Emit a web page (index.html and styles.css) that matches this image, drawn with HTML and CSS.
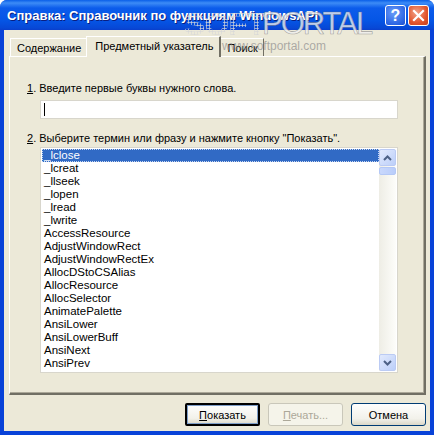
FILE: index.html
```html
<!DOCTYPE html>
<html lang="ru">

<head>
  <meta charset="UTF-8" />
  <title>Справка: Справочник по функциям WindowsAPI</title>
  <link rel="stylesheet" href="styles.css">
</head>

<body>
  <div class="window">
    <div class="titlebar">
      <span class="title">Справка: Справочник по функциям WindowsAPI</span>
      <div class="caption-buttons">
        <div class="cap-btn help">?</div>
        <div class="cap-btn close">
          <svg width="13" height="13" viewBox="0 0 13 13">
            <path d="M2 2 L11 11 M11 2 L2 11" stroke="#fff" stroke-width="2.2" stroke-linecap="square" />
          </svg>
        </div>
      </div>
    </div>

    <div class="client">
      <div class="tabs">
        <div class="tab">Содержание</div>
        <div class="tab active">Предметный указатель</div>
        <div class="tab">Поиск</div>
      </div>

      <div class="panel">
        <div class="step"><u>1</u>. Введите первые буквы нужного слова.</div>
        <div class="edit"><span class="caret"></span></div>

        <div class="step"><u>2</u>. Выберите термин или фразу и нажмите кнопку "Показать".</div>
        <div class="listbox">
          <ul class="items">
            <li class="selected">_lclose</li>
            <li>_lcreat</li>
            <li>_llseek</li>
            <li>_lopen</li>
            <li>_lread</li>
            <li>_lwrite</li>
            <li>AccessResource</li>
            <li>AdjustWindowRect</li>
            <li>AdjustWindowRectEx</li>
            <li>AllocDStoCSAlias</li>
            <li>AllocResource</li>
            <li>AllocSelector</li>
            <li>AnimatePalette</li>
            <li>AnsiLower</li>
            <li>AnsiLowerBuff</li>
            <li>AnsiNext</li>
            <li>AnsiPrev</li>
          </ul>
          <div class="scrollbar">
            <div class="sb-btn">
              <svg width="9" height="6" viewBox="0 0 9 6"><path d="M1 5 L4.5 1.5 L8 5" fill="none" stroke="#4d6185" stroke-width="2" /></svg>
            </div>
            <div class="sb-thumb"></div>
            <div class="sb-track"></div>
            <div class="sb-btn">
              <svg width="9" height="6" viewBox="0 0 9 6"><path d="M1 1 L4.5 4.5 L8 1" fill="none" stroke="#4d6185" stroke-width="2" /></svg>
            </div>
          </div>
        </div>
      </div>

      <div class="buttons">
        <button class="default"><u>П</u>оказать</button>
        <button disabled><u>П</u>ечать...</button>
        <button>Отмена</button>
      </div>
    </div>

    <!-- watermark over the caption -->
    <div class="watermark">
      <span class="wm-soft">SOFT</span><span class="wm-portal">PORTAL</span>
      <span class="wm-url">www.softportal.com</span>
    </div>
  </div>
</body>

</html>
```

FILE: styles.css
```css
body {
  margin: 0;
  font-family: "Liberation Sans", Arial, sans-serif;
  font-size: 11px;
  background: #fff;
}

.window {
  position: relative;
  width: 434px;
  height: 435px;
  box-sizing: border-box;
  background: #0842d8;
  border-radius: 7px 7px 0 0;
  display: flex;
  flex-direction: column;
  overflow: hidden;
}

.titlebar {
  height: 30px;
  flex: none;
  display: flex;
  align-items: center;
  justify-content: space-between;
  padding: 0 5px 0 7px;
  background: linear-gradient(#0a5fe8 0, #3d8cf6 3px, #0c5ceb 8px, #0556e6 20px, #0748d6 28px, #0a3fcc 30px);
}

.title {
  color: #fff;
  font-weight: bold;
  font-size: 13px;
  text-shadow: 1px 1px 0 #0a1e80;
  white-space: nowrap;
}

.caption-buttons {
  display: flex;
  gap: 2px;
  margin-top: 1px;
}

.cap-btn {
  width: 21px;
  height: 21px;
  box-sizing: border-box;
  border: 1px solid #fff;
  border-radius: 3px;
  display: flex;
  align-items: center;
  justify-content: center;
  color: #fff;
}

.help {
  background: radial-gradient(circle at 40% 35%, #6a9cf8, #2d66e4 70%, #1f4fcc);
  font-weight: bold;
  font-size: 16px;
}

.close {
  background: radial-gradient(circle at 40% 35%, #f2a48a, #e2552c 60%, #c5401d);
}

.client {
  flex: 1;
  margin: 0 4px 4px 4px;
  background: #ece9d8;
  padding: 6px 0 0 5px;
  display: flex;
  flex-direction: column;
}

.tabs {
  display: flex;
  align-items: flex-end;
  height: 20px;
  padding-left: 1px;
  position: relative;
  z-index: 1;
}

.tab {
  height: 18px;
  box-sizing: border-box;
  padding: 3px 5px 0 6px;
  border: 1px solid #fff;
  border-right-color: #716f64;
  border-bottom: none;
  background: #ece9d8;
  white-space: nowrap;
  font-size: 11px;
  color: #000;
}

.tab.active {
  height: 21px;
  padding: 3px 6px 0 8px;
  margin: 0 -1px -1px -1px;
  border-right: 2px solid #716f64;
  position: relative;
}

.panel {
  width: 417px;
  height: 339px;
  box-sizing: border-box;
  border: 1px solid #fff;
  border-right: 2px solid #716f64;
  border-bottom: 2px solid #716f64;
  box-shadow: inset -1px -1px 0 #aca899;
  padding: 25px 0 0 17px;
}

.step {
  height: 13px;
  color: #000;
  white-space: nowrap;
}

.step u {
  text-decoration-thickness: 1px;
}

.edit {
  width: 358px;
  height: 19px;
  box-sizing: border-box;
  margin: 5px 0 13px 13px;
  background: #fff;
  border: 1px solid #d8d6cc;
  display: flex;
  align-items: center;
  padding-left: 3px;
}

.caret {
  width: 1px;
  height: 13px;
  background: #000;
}

.listbox {
  width: 358px;
  height: 226px;
  box-sizing: border-box;
  margin: 2px 0 0 13px;
  background: #fff;
  border: 1px solid #d8d6cc;
  padding: 1px;
  display: flex;
  overflow: hidden;
}

.items {
  list-style: none;
  margin: 0;
  padding: 0;
  flex: 1;
  overflow: hidden;
}

.items li {
  height: 13px;
  line-height: 13px;
  padding-left: 2px;
  font-size: 11.5px;
  white-space: nowrap;
  color: #000;
}

.items li.selected {
  background: #316ac5;
  color: #fff;
  outline: 1px dotted #c7d6f0;
  outline-offset: -1px;
}

.scrollbar {
  width: 17px;
  display: flex;
  flex-direction: column;
  background: linear-gradient(90deg, #eeede5, #fdfdfa);
}

.sb-btn {
  height: 17px;
  box-sizing: border-box;
  border: 1px solid #bbcbf4;
  border-radius: 2px;
  background: linear-gradient(135deg, #e2eafd, #bccff9);
  display: flex;
  align-items: center;
  justify-content: center;
}

.sb-thumb {
  height: 8px;
  margin-top: 1px;
  box-sizing: border-box;
  border: 1px solid #b4c8f6;
  border-radius: 2px;
  background: linear-gradient(90deg, #c9d8fc, #b9cdfa);
}

.sb-track {
  flex: 1;
}

.buttons {
  display: flex;
  justify-content: flex-end;
  gap: 8px;
  padding: 8px 4px 0 0;
}

button {
  width: 75px;
  height: 23px;
  box-sizing: border-box;
  font-family: "Liberation Sans", Arial, sans-serif;
  font-size: 11px;
  color: #000;
  background: linear-gradient(#fefefd, #f2f1ea 70%, #dcd8c8);
  border: 1px solid #003c74;
  border-radius: 3px;
  padding: 0;
}

button.default {
  border: 2px solid #000;
  border-radius: 2px;
  box-shadow: inset 0 0 0 1px #7e9ec8;
}

button:disabled {
  color: #aca899;
  border-color: #c9c7ba;
  background: #f5f4ea;
}

/* semi-transparent site watermark, drawn over caption and tabs */
.watermark {
  position: absolute;
  z-index: 2;
  left: 184px;
  top: 6px;
  width: 190px;
  height: 50px;
  pointer-events: none;
}

.wm-soft {
  position: absolute;
  left: 0;
  top: 0;
  font-size: 32px;
  font-weight: bold;
  letter-spacing: -1px;
  color: transparent;
  background: radial-gradient(circle, rgba(215, 215, 215, 0.9) 0.9px, transparent 1.3px) 0 0 / 3px 3px;
  -webkit-background-clip: text;
  background-clip: text;
}

.wm-portal {
  position: absolute;
  left: 78px;
  top: 0;
  font-size: 31px;
  letter-spacing: -2px;
  color: rgba(240, 240, 240, 0.8);
  -webkit-text-stroke: 0.6px rgba(110, 110, 110, 0.6);
}

.wm-url {
  position: absolute;
  left: 38px;
  top: 33px;
  font-size: 12px;
  color: rgba(140, 140, 140, 0.7);
}
```
